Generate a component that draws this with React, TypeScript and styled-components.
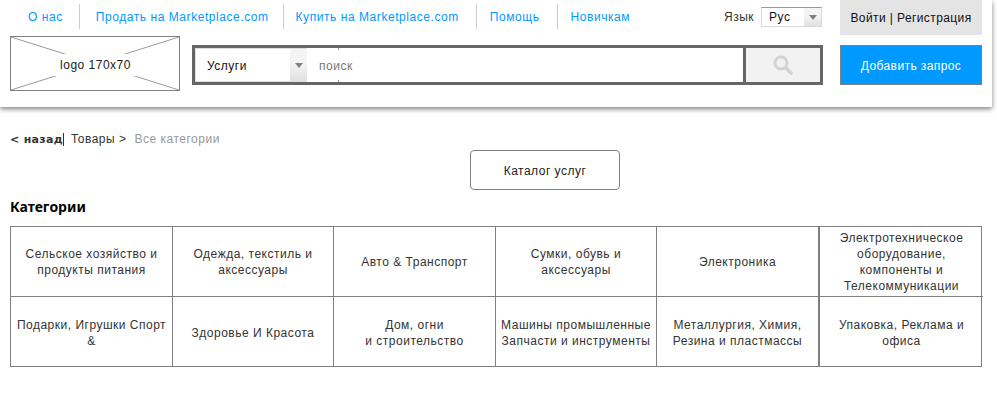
import React from "react";
import styled, { createGlobalStyle } from "styled-components";

const GlobalStyle = createGlobalStyle`
  html, body {
    margin: 0;
    padding: 0;
    background: #ffffff;
    font-family: "Liberation Sans", Arial, sans-serif;
    font-size: 12px;
    letter-spacing: 0.5px;
    color: #222222;
  }
  * {
    box-sizing: border-box;
  }
`;

const Page = styled.div`
  width: 997px;
  height: 400px;
  overflow: hidden;
`;

const Header = styled.header`
  width: 992px;
  height: 107px;
  padding-left: 10px;
  background: #ffffff;
  box-shadow: 0 2px 5px rgba(0, 0, 0, 0.5);
`;

const TopRow = styled.div`
  display: flex;
  height: 36px;
`;

const Nav = styled.nav`
  display: flex;
  align-items: flex-start;
  width: 714px;
  padding: 4px 0 0 2px;
`;

const NavLink = styled.a<{ $left: number; $right: number }>`
  display: flex;
  align-items: center;
  height: 25px;
  padding: 0 ${(p) => p.$right}px 0 ${(p) => p.$left}px;
  border-left: 1px solid #cccccc;
  color: #0099ff;
  font-size: 12px;
  letter-spacing: 0.56px;

  &:first-child {
    border-left: 0;
  }
`;

const Lang = styled.div`
  display: flex;
  align-items: center;
  height: 20px;
  margin-top: 7px;
  width: 116px;
  gap: 7px;
  color: #333333;
`;

const LangSelect = styled.div`
  display: flex;
  align-items: center;
  justify-content: space-between;
  width: 61px;
  height: 20px;
  padding-left: 7px;
  border: 1px solid #d9d9d9;
  border-top-color: #999999;
  color: #111111;
`;

const Arrow = styled.span`
  display: flex;
  align-items: center;
  justify-content: center;
  align-self: stretch;
  width: 17px;
  background: linear-gradient(#f4f4f4 45%, #e0e0e0);

  &::after {
    content: "";
    border-left: 4px solid transparent;
    border-right: 4px solid transparent;
    border-top: 5px solid #808080;
  }
`;

const LoginButton = styled.div`
  display: flex;
  align-items: center;
  justify-content: center;
  width: 142px;
  height: 35px;
  background: #e4e4e4;
  color: #111111;
  letter-spacing: 0.4px;
`;

const BottomRow = styled.div`
  display: flex;
  align-items: flex-start;
`;

const Logo = styled.div`
  position: relative;
  display: flex;
  align-items: center;
  justify-content: center;
  width: 170px;
  height: 55px;
  padding: 2px 0 0 1px;
  border: 1px solid #808080;
`;

const LogoCross = styled.svg`
  position: absolute;
  inset: 0;
  width: 100%;
  height: 100%;
`;

const LogoText = styled.span`
  position: relative;
  padding: 4px 6px;
  background: #ffffff;
`;

const SearchBar = styled.div`
  display: flex;
  width: 631px;
  height: 40px;
  margin: 9px 0 0 12px;
  border: 3px solid #666666;
`;

const CategorySelect = styled.div`
  display: flex;
  align-items: center;
  justify-content: space-between;
  width: 112px;
  padding-left: 11px;
  border: 1px solid #dddddd;
  border-right: 0;
  color: #111111;
`;

const CategoryLabel = styled.span`
  padding-top: 1px;
`;

const SearchInput = styled.div`
  position: relative;
  display: flex;
  align-items: center;
  flex: 1;
  padding: 1px 0 0 12px;
  color: #777777;

  &::before,
  &::after {
    content: "";
    position: absolute;
    left: 31px;
    width: 1px;
    height: 2px;
    background: #999999;
  }

  &::before {
    top: 0;
  }

  &::after {
    bottom: 0;
  }
`;

const SearchButton = styled.div`
  display: flex;
  align-items: center;
  justify-content: center;
  width: 77px;
  border-left: 3px solid #666666;
  background: #f2f2f2;
`;

const AddButton = styled.div`
  display: flex;
  align-items: center;
  justify-content: center;
  width: 142px;
  height: 40px;
  margin: 9px 0 0 17px;
  padding-top: 1px;
  border: 1px solid #808080;
  background: #0099ff;
  color: #ffffff;
  letter-spacing: 0.4px;
`;

const Breadcrumbs = styled.div`
  display: flex;
  align-items: center;
  height: 16px;
  margin: 24px 0 0 10px;
  color: #333333;
`;

const Back = styled.b`
  font-family: "DejaVu Sans", sans-serif;
  font-size: 11px;
  letter-spacing: 0.3px;
  border-right: 1px solid #333333;
  margin-right: 7px;
`;

const Current = styled.span`
  margin-left: 8px;
  color: #999999;
`;

const CatalogRow = styled.div`
  display: flex;
  margin: 3px 0 0 470px;
`;

const CatalogButton = styled.div`
  display: flex;
  align-items: center;
  justify-content: center;
  width: 150px;
  height: 40px;
  padding-top: 1px;
  border: 1px solid #808080;
  border-radius: 4px;
  color: #222222;
`;

const Title = styled.h2`
  height: 18px;
  margin: 8px 0 10px 10px;
  font-family: "Noto Sans", sans-serif;
  font-size: 14px;
  line-height: 18px;
  font-weight: 700;
  letter-spacing: 0;
  color: #000000;
`;

const Grid = styled.div`
  display: grid;
  grid-template-columns: 162px 161px 162px 161px 162px 164px;
  grid-auto-rows: 70px;
  width: 972px;
  height: 141px;
  margin-left: 10px;
  border: 1px solid #808080;
`;

const Cell = styled.div<{ $thick?: boolean }>`
  display: flex;
  align-items: center;
  justify-content: center;
  padding: 1px 3px 0;
  text-align: center;
  line-height: 16px;
  color: #333333;
  border-right: 1px solid #808080;
  border-left: ${(p) => (p.$thick ? "1px solid #808080" : "0")};

  &:nth-child(6n) {
    border-right: 0;
  }

  &:nth-child(-n + 6) {
    border-bottom: 1px solid #808080;
  }
`;

const navItems = [
  { label: "О нас", left: 16, right: 16 },
  { label: "Продать на Marketplace.com", left: 16, right: 14 },
  { label: "Купить на Marketplace.com", left: 12, right: 17 },
  { label: "Помощь", left: 13, right: 17 },
  { label: "Новичкам", left: 13, right: 0 },
];

const categories: React.ReactNode[] = [
  "Сельское хозяйство и продукты питания",
  "Одежда, текстиль и аксессуары",
  "Авто & Транспорт",
  "Сумки, обувь и аксессуары",
  "Электроника",
  "Электротехническое оборудование, компоненты и Телекоммуникации",
  "Подарки, Игрушки Спорт &",
  "Здоровье И Красота",
  <>
    Дом, огни
    <br />и строительство
  </>,
  <>
    Машины промышленные
    <br />
    Запчасти и инструменты
  </>,
  "Металлургия, Химия, Резина и пластмассы",
  "Упаковка, Реклама и офиса",
];

const App = () => {
  return (
    <Page>
      <GlobalStyle />
      <Header>
        <TopRow>
          <Nav>
            {navItems.map((item) => (
              <NavLink key={item.label} $left={item.left} $right={item.right}>
                {item.label}
              </NavLink>
            ))}
          </Nav>
          <Lang>
            Язык
            <LangSelect>
              Рус
              <Arrow />
            </LangSelect>
          </Lang>
          <LoginButton>Войти | Регистрация</LoginButton>
        </TopRow>
        <BottomRow>
          <Logo>
            <LogoCross viewBox="0 0 168 53" preserveAspectRatio="none">
              <line x1="0" y1="0" x2="168" y2="53" stroke="#999999" />
              <line x1="168" y1="0" x2="0" y2="53" stroke="#999999" />
            </LogoCross>
            <LogoText>logo 170x70</LogoText>
          </Logo>
          <SearchBar>
            <CategorySelect>
              <CategoryLabel>Услуги</CategoryLabel>
              <Arrow />
            </CategorySelect>
            <SearchInput>поиск</SearchInput>
            <SearchButton>
              <svg width="20" height="20" viewBox="0 0 20 20" fill="none">
                <circle cx="8" cy="8" r="6" stroke="#d3d3d3" strokeWidth="3" />
                <line x1="12.5" y1="12.5" x2="18" y2="18" stroke="#d3d3d3" strokeWidth="3.5" strokeLinecap="round" />
              </svg>
            </SearchButton>
          </SearchBar>
          <AddButton>Добавить запрос</AddButton>
        </BottomRow>
      </Header>
      <Breadcrumbs>
        <Back>&lt; назад</Back>
        Товары &gt;
        <Current>Все категории</Current>
      </Breadcrumbs>
      <CatalogRow>
        <CatalogButton>Каталог услуг</CatalogButton>
      </CatalogRow>
      <Title>Категории</Title>
      <Grid>
        {categories.map((category, index) => (
          <Cell key={index} $thick={index === 5 || index === 11}>
            {category}
          </Cell>
        ))}
      </Grid>
    </Page>
  );
};

export default App;
